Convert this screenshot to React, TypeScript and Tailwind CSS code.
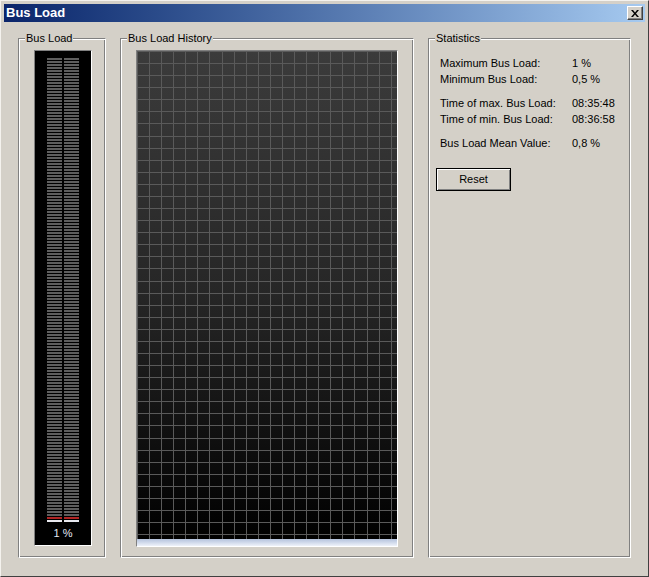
import React from 'react';

const font = { fontFamily: '"Liberation Sans", Arial, sans-serif' };

function GroupBox({ title, className, children }: { title: string; className: string; children?: React.ReactNode }) {
  return (
    <div
      className={`relative shrink-0 border border-t-[#808080] border-l-[#808080] border-r-white border-b-white shadow-[inset_1px_1px_0_#fff,inset_-1px_-1px_0_#808080] ${className}`}
    >
      <span className="absolute left-[6px] top-[-8px] bg-[#d4d0c8] px-[1px] text-[11px] leading-[14px] text-black">
        {title}
      </span>
      {children}
    </div>
  );
}

function Meter() {
  const rows = Array.from({ length: 155 }, (_, i) => i);
  return (
    <div className="ml-[15px] mt-[11px] flex h-[496px] w-[58px] flex-col items-center border border-t-[#808080] border-l-[#808080] border-r-white border-b-white bg-black">
      <div className="mt-[7px] flex gap-[2px]">
        {[0, 1].map(col => (
          <div key={col} className="flex w-[15px] flex-col gap-[1px]">
            {rows.map(r => (
              <div
                key={r}
                className={`h-[2px] ${r === 154 ? 'bg-[#e8e8ee]' : r === 153 ? 'bg-[#b02424]' : 'bg-[#5e5e5e]'}`}
              />
            ))}
          </div>
        ))}
      </div>
      <div className="mt-[4px] text-[11px] leading-[14px] text-[#e4e8f4]">1 %</div>
    </div>
  );
}

function HistoryChart() {
  const w = 260;
  const h = 488;
  const step = 12.08;
  const xs = Array.from({ length: Math.floor(w / step) + 1 }, (_, i) => Math.round(i * step) + 0.5);
  const ys = Array.from({ length: Math.floor(h / step) + 1 }, (_, i) => Math.round(i * step) + 0.5);
  return (
    <div className="ml-[15px] mt-[11px] flex w-[262px] flex-col border border-t-[#808080] border-l-[#808080] border-r-white border-b-white">
      <svg width={w} height={h} className="block">
        <defs>
          <linearGradient id="bg" x1="0" y1="0" x2="0" y2="1">
            <stop offset="0" stopColor="#3b3b3b" />
            <stop offset="0.5" stopColor="#262626" />
            <stop offset="1" stopColor="#000000" />
          </linearGradient>
        </defs>
        <rect width={w} height={h} fill="url(#bg)" />
        {xs.map(x => (
          <line key={'x' + x} x1={x} y1={0} x2={x} y2={h} stroke="#5a5a5a" strokeWidth={1} />
        ))}
        {ys.map(y => (
          <line key={'y' + y} x1={0} y1={y} x2={w} y2={y} stroke="#5a5a5a" strokeWidth={1} />
        ))}
      </svg>
      <div className="h-[7px] bg-gradient-to-b from-[#b4c2dc] to-[#eef2fa]" />
    </div>
  );
}

const stats: [string, string][][] = [
  [
    ['Maximum Bus Load:', '1 %'],
    ['Minimum Bus Load:', '0,5 %'],
  ],
  [
    ['Time of max. Bus Load:', '08:35:48'],
    ['Time of min. Bus Load:', '08:36:58'],
  ],
  [['Bus Load Mean Value:', '0,8 %']],
];

export default function App() {
  return (
    <div
      style={font}
      className="flex h-[577px] w-[649px] flex-col border border-t-[#f4f2ee] border-l-[#f4f2ee] border-r-[#404040] border-b-[#404040] bg-[#d4d0c8] p-[3px] pb-[3px]"
    >
      <div className="flex h-[18px] shrink-0 items-center justify-between bg-gradient-to-r from-[#0a246a] to-[#a6caf0] pl-[2px] pr-[2px]">
        <span className="text-[13px] font-bold leading-[16px] text-white">Bus Load</span>
        <button className="flex h-[14px] w-[16px] items-center justify-center border border-t-white border-l-white border-r-[#404040] border-b-[#404040] bg-[#d4d0c8] shadow-[inset_-1px_-1px_0_#808080]">
          <svg width="8" height="7" viewBox="0 0 8 7">
            <path d="M0 0h2l2 2.5L6 0h2L5 3.5 8 7H6L4 4.5 2 7H0l3-3.5z" fill="#000" />
          </svg>
        </button>
      </div>

      <div className="flex flex-1 gap-[14px] pl-[14px] pt-[16px]">
        <GroupBox title="Bus Load" className="h-[520px] w-[88px]">
          <Meter />
        </GroupBox>

        <GroupBox title="Bus Load History" className="h-[520px] w-[294px]">
          <HistoryChart />
        </GroupBox>

        <GroupBox title="Statistics" className="h-[520px] w-[203px]">
          <div className="flex flex-col gap-[8px] pl-[11px] pt-[16px] text-[11px] leading-[16px] text-black">
            {stats.map((block, bi) => (
              <div key={bi} className="flex flex-col">
                {block.map(([label, value]) => (
                  <div key={label} className="flex">
                    <span className="w-[132px]">{label}</span>
                    <span>{value}</span>
                  </div>
                ))}
              </div>
            ))}
          </div>
          <button className="ml-[7px] mt-[17px] flex h-[23px] w-[75px] items-center justify-center border border-black bg-[#d4d0c8] text-[11px] text-black shadow-[inset_1px_1px_0_#fff,inset_-1px_-1px_0_#808080]">
            Reset
          </button>
        </GroupBox>
      </div>
    </div>
  );
}
